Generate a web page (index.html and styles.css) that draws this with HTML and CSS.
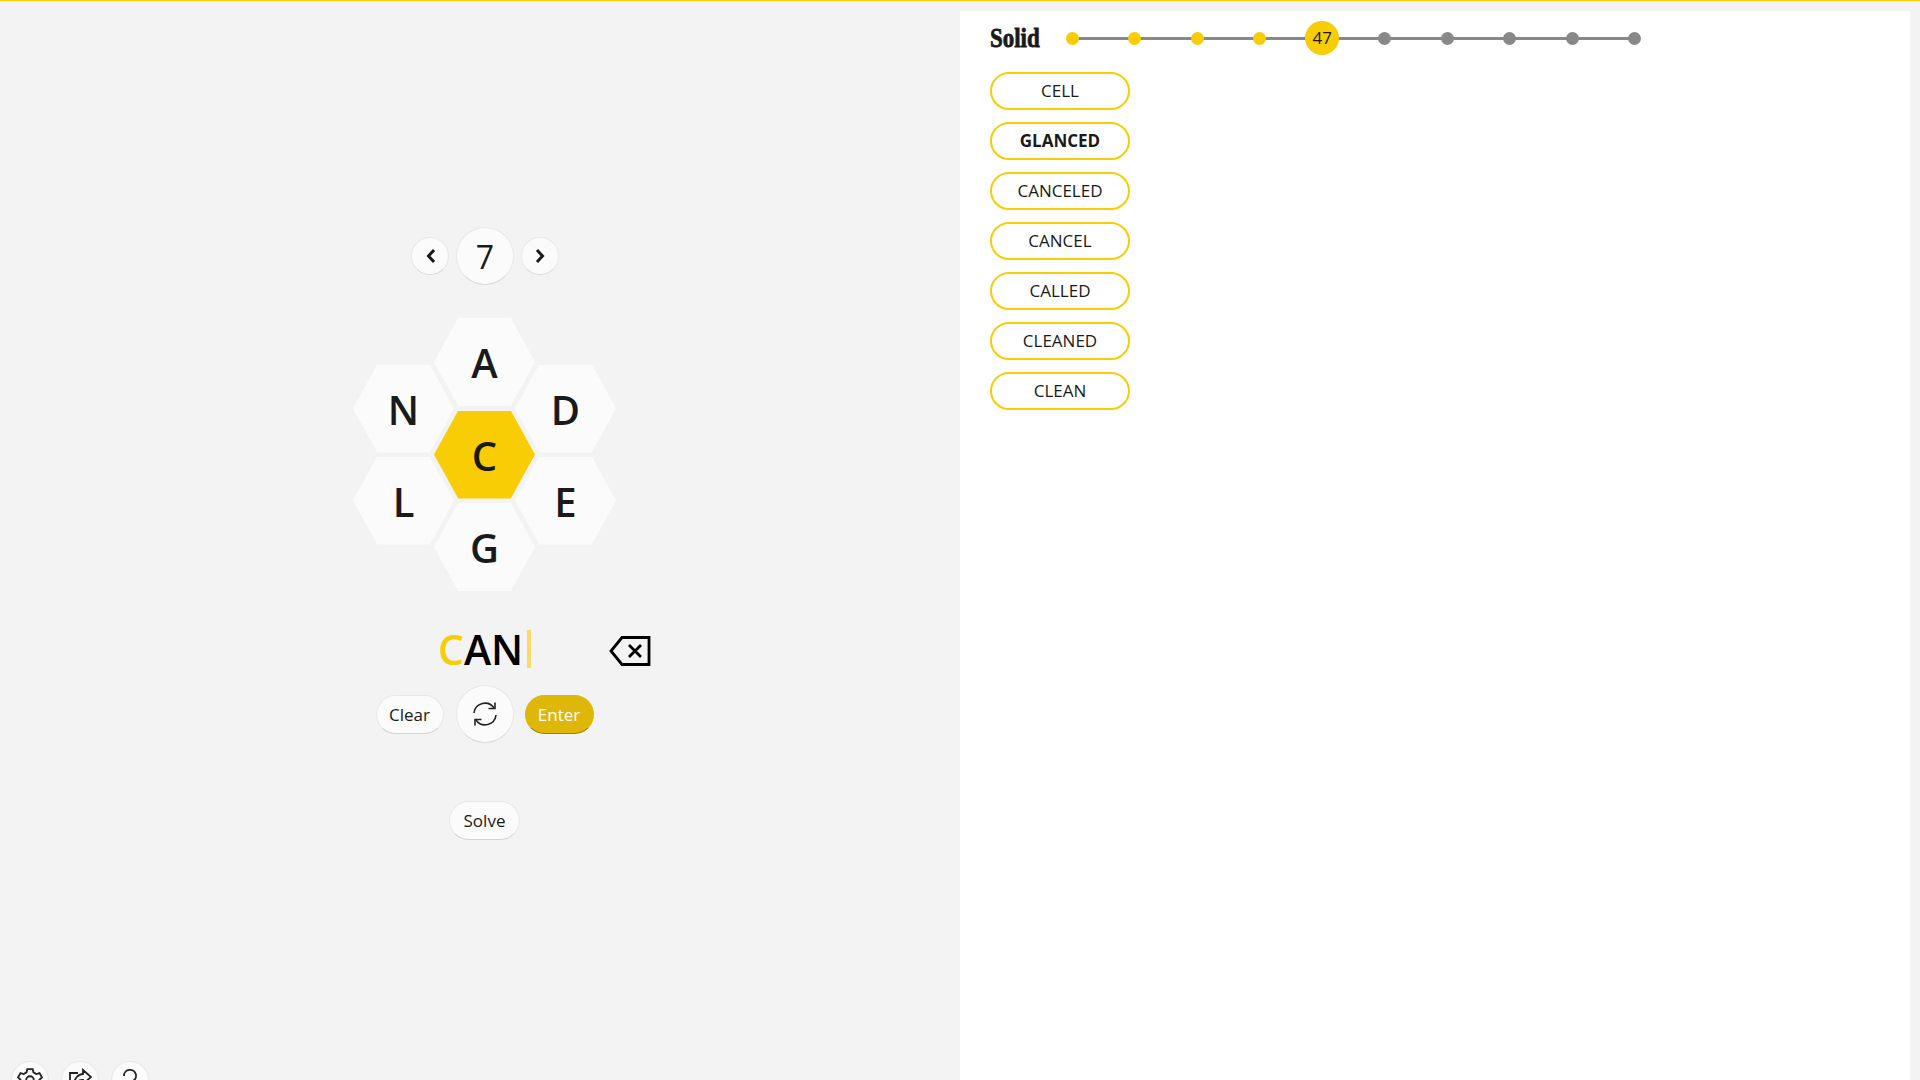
FILE: index.html
```html
<!DOCTYPE html>
<html lang="en">
<head>
	<meta charset="UTF-8">
	<meta name="viewport" content="width=device-width, initial-scale=1.0">
	<title>Spelling Bee</title>
	<link rel="stylesheet" href="styles.css">
</head>
<body>
	<div class="page">
		<div class="game">
			<div class="nav_row">
				<button class="round small" aria-label="Previous">
					<svg width="16" height="18" viewBox="0 0 16 18"><path d="M12 3 L6.5 9 L12 15" class="chev"/></svg>
				</button>
				<div class="round big number">7</div>
				<button class="round small" aria-label="Next">
					<svg width="16" height="18" viewBox="0 0 16 18"><path d="M5 3 L10.5 9 L5 15" class="chev"/></svg>
				</button>
			</div>

			<div class="hive">
				<div class="hive_col">
					<div class="hex">N</div>
					<div class="hex">L</div>
				</div>
				<div class="hive_col mid">
					<div class="hex">A</div>
					<div class="hex center">C</div>
					<div class="hex">G</div>
				</div>
				<div class="hive_col">
					<div class="hex">D</div>
					<div class="hex">E</div>
				</div>
			</div>

			<div class="input_row">
				<div class="word"><span class="key">C</span>AN<span class="caret"></span></div>
				<svg class="del" width="42" height="32" viewBox="0 0 42 32">
					<path d="M40 2.5 H13 L2 16 L13 29.5 H40 Z" fill="none" stroke="#000" stroke-width="2.8"/>
					<path d="M20 10 L32 22 M32 10 L20 22" fill="none" stroke="#000" stroke-width="2.8"/>
				</svg>
			</div>

			<div class="btn_row">
				<button class="pill">Clear</button>
				<button class="round big" aria-label="Shuffle">
					<svg width="26" height="26" viewBox="0 0 26 26" fill="none" stroke="#222" stroke-width="1.6">
						<path d="M2 12 A11 11 0 0 1 22 7"/>
						<path d="M23 1.5 V7.5 H16.5"/>
						<path d="M24 14 A11 11 0 0 1 4 19"/>
						<path d="M3 24.5 V18.5 H9.5"/>
					</svg>
				</button>
				<button class="pill enter">Enter</button>
			</div>

			<button class="pill solve">Solve</button>

			<div class="tools">
				<button class="round small" aria-label="Settings">
					<svg width="26" height="26" viewBox="0 0 24 24" fill="none" stroke="#222" stroke-width="1.7">
						<path d="M9.5 2 h5 l.7 3 2.6 1.5 3-.9 2.2 4 -2.2 2.1 v2.6 l2.2 2.1 -2.2 4 -3-.9 -2.6 1.5 -.7 3 h-5 l-.7-3 -2.6-1.5 -3 .9 -2.2-4 2.2-2.1 v-2.6 l-2.2-2.1 2.2-4 3 .9 2.6-1.5 z"/>
						<circle cx="12" cy="12" r="3.5"/>
					</svg>
				</button>
				<button class="round small" aria-label="Share">
					<svg width="24" height="24" viewBox="0 0 24 24" fill="none" stroke="#222" stroke-width="1.8">
						<path d="M10 5 H2 V21 H17 V16"/>
						<path d="M15 2 L23 9 L15 16 V12 C11 12 8 13 6 17 C6 11 10 6 15 6 Z"/>
					</svg>
				</button>
				<button class="round small" aria-label="Help">
					<svg width="24" height="24" viewBox="0 0 24 24" fill="none" stroke="#222" stroke-width="1.8">
						<path d="M6 8 A6 6 0 1 1 15 13 C13 14 12 15 12 17"/>
						<circle cx="12" cy="21" r=".6"/>
					</svg>
				</button>
			</div>
		</div>

		<div class="panel">
			<div class="rank_row">
				<div class="rank">Solid</div>
				<div class="track">
					<div class="step"><span class="dot on"></span></div>
					<div class="step"><span class="dot on"></span></div>
					<div class="step"><span class="dot on"></span></div>
					<div class="step"><span class="dot on"></span></div>
					<div class="step"><span class="score">47</span></div>
					<div class="step"><span class="dot"></span></div>
					<div class="step"><span class="dot"></span></div>
					<div class="step"><span class="dot"></span></div>
					<div class="step"><span class="dot"></span></div>
					<div class="step"><span class="dot"></span></div>
				</div>
			</div>
			<ul class="found">
				<li>CELL</li>
				<li class="pangram">GLANCED</li>
				<li>CANCELED</li>
				<li>CANCEL</li>
				<li>CALLED</li>
				<li>CLEANED</li>
				<li>CLEAN</li>
			</ul>
		</div>
	</div>
</body>
</html>
```

FILE: styles.css
```css
body,ul{
	margin:0;
	padding:0;
}

body{
	height:1080px;
	overflow:hidden;
	background-color:#f3f3f3;
	font-family:"Open Sans","Noto Sans",sans-serif;
	color:#1a1a1a;
}

button{
	font-family:inherit;
	color:inherit;
	padding:0;
	cursor:pointer;
}

.page{
	display:flex;
	height:1079px;
	border-top:1px solid #f8cd05;
}

/* left side */
.game{
	width:960px;
	padding-top:226px;
	display:flex;
	flex-direction:column;
	align-items:center;
	box-sizing:border-box;
}

.nav_row{
	display:flex;
	align-items:center;
	gap:7px;
	margin-left:10px;
}

.round{
	display:flex;
	align-items:center;
	justify-content:center;
	border-radius:50%;
	background-color:#fbfbfb;
	border:1px solid #e8e8e8;
	border-bottom-color:#dadada;
	box-sizing:border-box;
	flex:none;
}

.small{
	width:38px;
	height:38px;
}

.big{
	width:58px;
	height:58px;
}

.number{
	font-size:32px;
}

.chev{
	fill:none;
	stroke:#1a1a1a;
	stroke-width:3;
}

.hive{
	display:flex;
	align-items:center;
	margin:33px 0 0 9px;
}

.hive_col{
	display:flex;
	flex-direction:column;
	gap:4px;
}

.hive_col.mid{
	gap:4.5px;
	margin:0 -20px;
}

.hex{
	width:101px;
	height:88px;
	line-height:90px;
	text-align:center;
	font-size:40px;
	font-weight:600;
	background-color:#fbfbfb;
	clip-path:polygon(24% 0,76% 0,100% 50%,76% 100%,24% 100%,0 50%);
}

.hex.center{
	background-color:#f8cd05;
}

.input_row{
	display:grid;
	grid-template-columns:1fr auto 1fr;
	align-items:center;
	width:400px;
	margin:36px 0 0 9px;
	height:44px;
}

.word{
	grid-column:2;
	display:flex;
	align-items:center;
	font-size:41px;
	font-weight:600;
	color:#000;
	line-height:44px;
}

.key{
	color:#f8cd05;
}

.caret{
	width:4px;
	height:38px;
	margin-left:4px;
	background-color:#fbd968;
}

.del{
	grid-column:3;
	margin-left:78px;
	margin-top:3px;
}

.btn_row{
	display:flex;
	align-items:center;
	gap:12px;
	margin:14px 0 0 9px;
}

.pill{
	height:39px;
	width:68px;
	border-radius:20px;
	background-color:#fbfbfb;
	border:1px solid #e8e8e8;
	border-bottom-color:#d4d4d4;
	font-size:17px;
	box-sizing:border-box;
}

.enter{
	width:69px;
	margin-left:-1px;
	background-color:#dfb708;
	border-color:#dfb708;
	border-bottom-color:#9c8006;
	color:#fff;
}

.solve{
	width:71px;
	margin:58px 0 0 9px;
	flex:none;
}

.tools{
	display:flex;
	gap:12px;
	align-self:flex-start;
	margin:auto 0 0 11px;
	height:19px;
}

/* right side */
.panel{
	width:950px;
	margin-top:10px;
	padding:10px 0 0 30px;
	background-color:#fff;
	box-sizing:border-box;
}

.rank_row{
	display:flex;
	align-items:center;
	height:34px;
}

.rank{
	width:51px;
	font-family:"Liberation Serif",serif;
	font-weight:bold;
	font-size:27px;
	-webkit-text-stroke:.8px #1a1a1a;
	transform:scaleX(.85);
	transform-origin:left center;
}

.track{
	display:flex;
	align-items:center;
	height:34px;
	background:linear-gradient(#888,#888) center/calc(100% - 62.5px) 3px no-repeat;
}

.step{
	width:62.5px;
	display:flex;
	justify-content:center;
}

.dot{
	width:13px;
	height:13px;
	border-radius:50%;
	background-color:#888;
}

.dot.on{
	background-color:#f8cd05;
}

.score{
	width:34px;
	height:34px;
	line-height:34px;
	border-radius:50%;
	background-color:#f8cd05;
	text-align:center;
	font-size:17px;
}

.found{
	list-style:none;
	margin-top:17px;
	display:flex;
	flex-direction:column;
	gap:12px;
}

.found li{
	width:140px;
	height:38px;
	line-height:34px;
	border:2px solid #f8cd05;
	border-radius:19px;
	text-align:center;
	font-size:17px;
	box-sizing:border-box;
}

.found .pangram{
	font-weight:bold;
}
```
